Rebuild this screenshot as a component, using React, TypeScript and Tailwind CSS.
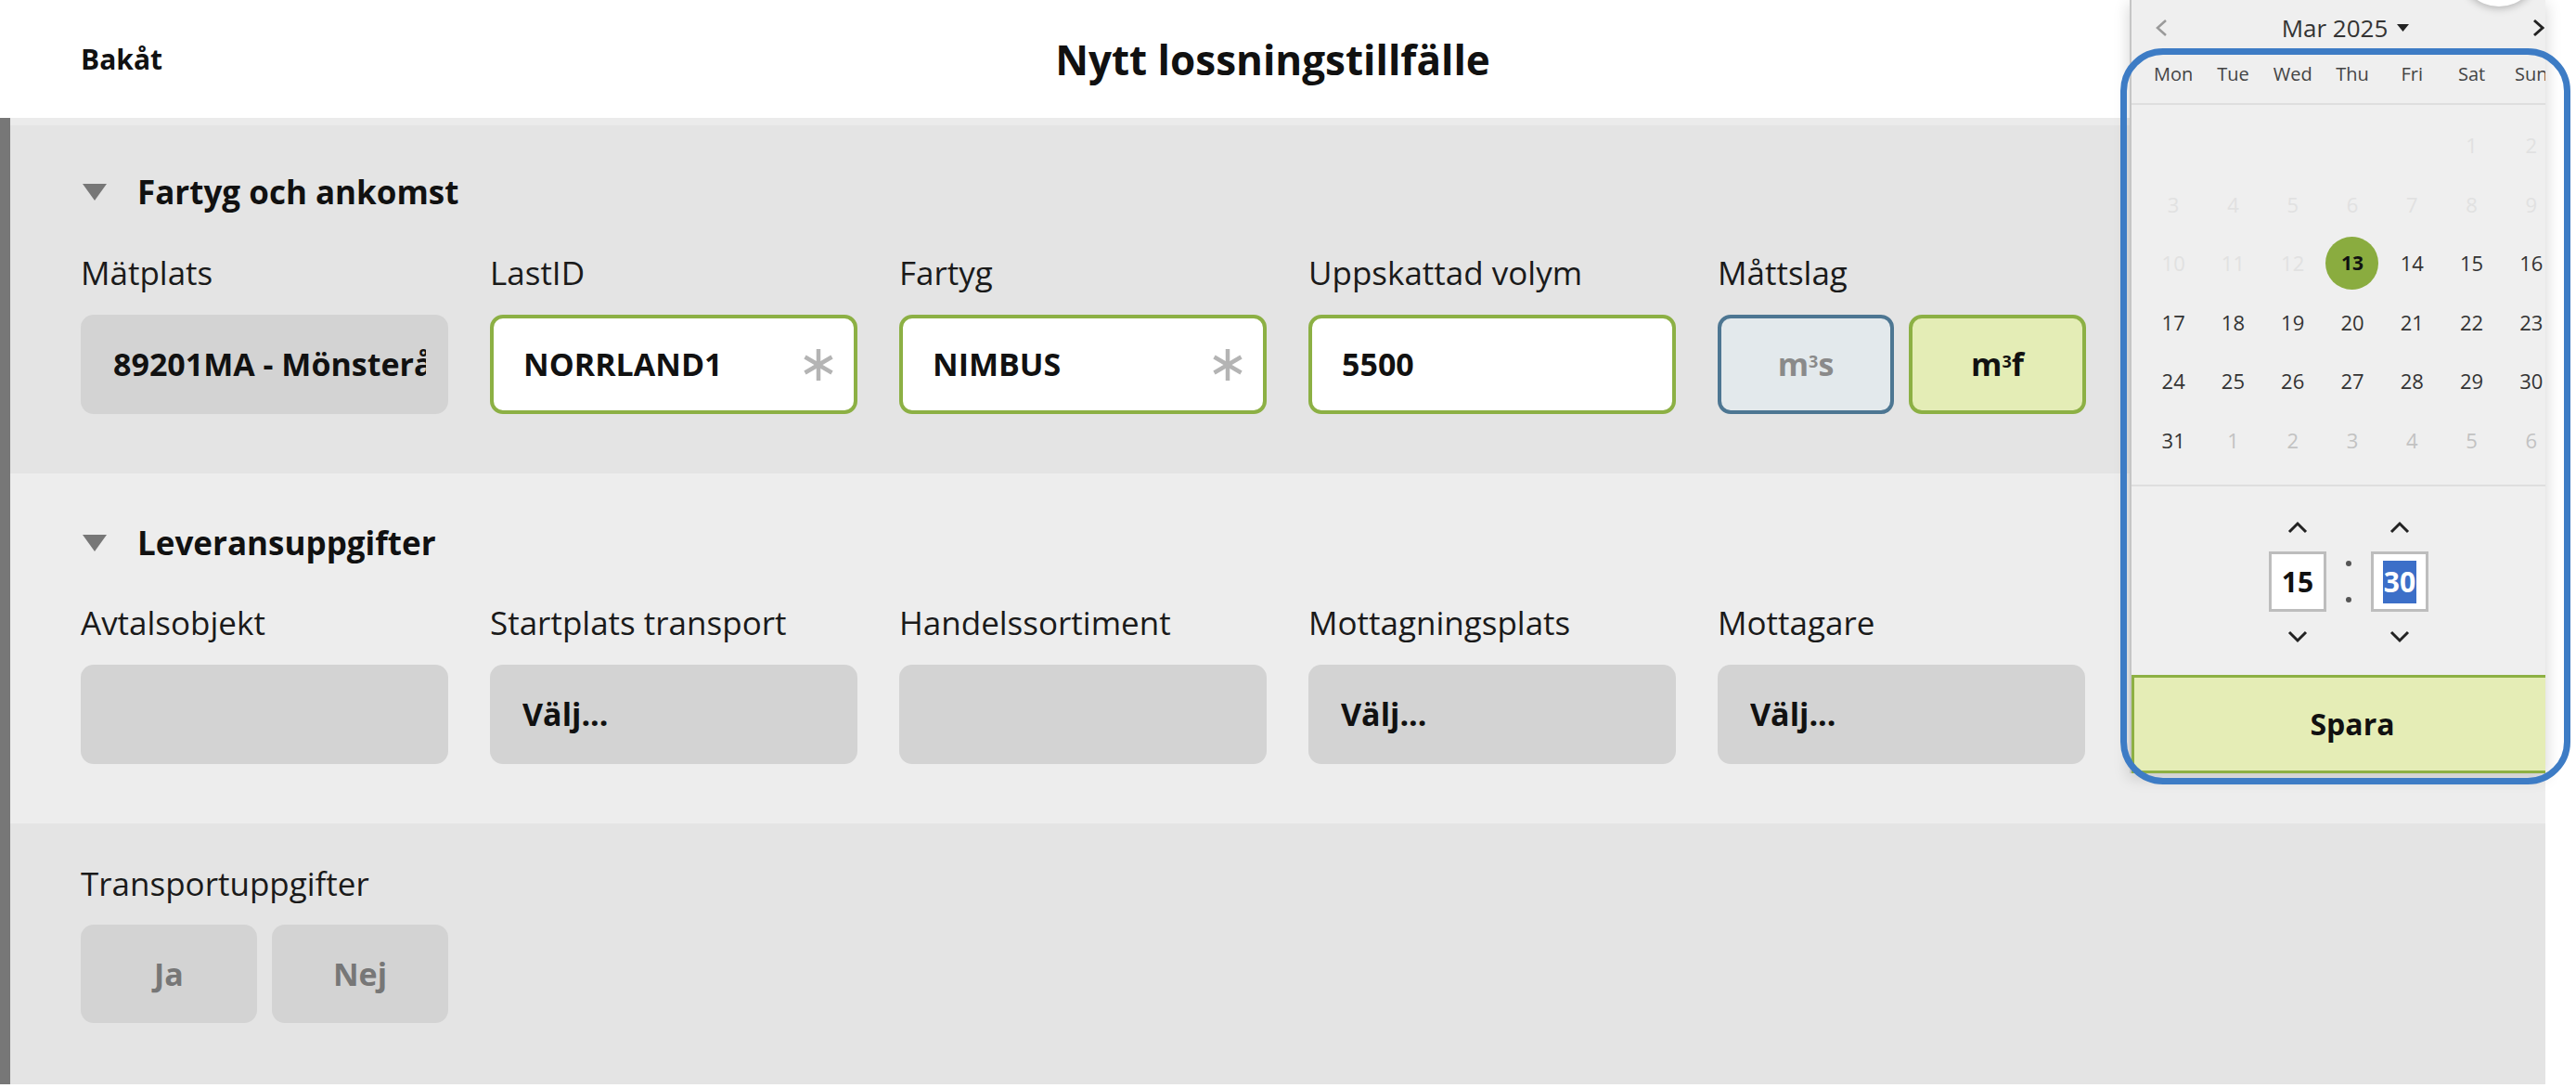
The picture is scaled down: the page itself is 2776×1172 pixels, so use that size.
import React from 'react';

type Field = { label: string; value?: string; kind: 'grey' | 'input' | 'required' };

const row1: Field[] = [
  { label: 'Mätplats', value: '89201MA - Mönsterås', kind: 'grey' },
  { label: 'LastID', value: 'NORRLAND1', kind: 'required' },
  { label: 'Fartyg', value: 'NIMBUS', kind: 'required' },
  { label: 'Uppskattad volym', value: '5500', kind: 'input' },
];

const row2: Field[] = [
  { label: 'Avtalsobjekt', kind: 'grey' },
  { label: 'Startplats transport', value: 'Välj...', kind: 'grey' },
  { label: 'Handelssortiment', kind: 'grey' },
  { label: 'Mottagningsplats', value: 'Välj...', kind: 'grey' },
  { label: 'Mottagare', value: 'Välj...', kind: 'grey' },
];

// dag-status: f = passerad (svag), n = normal, s = vald, x = nästa månad
const weeks: [string, string][][] = [
  [['', 'f'], ['', 'f'], ['', 'f'], ['', 'f'], ['', 'f'], ['1', 'f'], ['2', 'f']],
  [['3', 'f'], ['4', 'f'], ['5', 'f'], ['6', 'f'], ['7', 'f'], ['8', 'f'], ['9', 'f']],
  [['10', 'f'], ['11', 'f'], ['12', 'f'], ['13', 's'], ['14', 'n'], ['15', 'n'], ['16', 'n']],
  [['17', 'n'], ['18', 'n'], ['19', 'n'], ['20', 'n'], ['21', 'n'], ['22', 'n'], ['23', 'n']],
  [['24', 'n'], ['25', 'n'], ['26', 'n'], ['27', 'n'], ['28', 'n'], ['29', 'n'], ['30', 'n']],
  [['31', 'n'], ['1', 'x'], ['2', 'x'], ['3', 'x'], ['4', 'x'], ['5', 'x'], ['6', 'x']],
];

function Triangle() {
  return (
    <svg width="26" height="18" viewBox="0 0 26 18" className="shrink-0">
      <path d="M0 0h26L13 18z" fill="#777" />
    </svg>
  );
}

function Asterisk() {
  return (
    <svg width="36" height="36" viewBox="0 0 36 36" className="shrink-0">
      <g stroke="#b4b4b4" strokeWidth="4.5">
        <line x1="18" y1="1" x2="18" y2="35" />
        <line x1="3.5" y1="9.5" x2="32.5" y2="26.5" />
        <line x1="3.5" y1="26.5" x2="32.5" y2="9.5" />
      </g>
    </svg>
  );
}

function Chevron({ up, color = '#222', w = 22 }: { up?: boolean; color?: string; w?: number }) {
  return (
    <svg width={w} height="14" viewBox="0 0 22 14">
      <polyline
        points={up ? '2,12 11,3 20,12' : '2,2 11,11 20,2'}
        fill="none"
        stroke={color}
        strokeWidth="3"
      />
    </svg>
  );
}

function FieldBox({ f }: { f: Field }) {
  if (f.kind === 'grey') {
    return (
      <div className="h-full w-full rounded-[14px] bg-[#d3d3d3] pl-[35px] pr-[24px] flex items-center">
        <span className="overflow-hidden whitespace-nowrap text-[34px] font-bold">{f.value}</span>
      </div>
    );
  }
  return (
    <div className="h-full w-full rounded-[14px] bg-white border-[4px] border-[#8cb044] pl-[32px] pr-[20px] flex items-center justify-between">
      <span className="whitespace-nowrap text-[34px] font-bold">{f.value}</span>
      {f.kind === 'required' && <Asterisk />}
    </div>
  );
}

function Column({ f }: { f: Field }) {
  return (
    <div className="w-[396px] flex flex-col">
      <div className="h-[46px] leading-[46px] text-[35px] text-[#1a1a1a] whitespace-nowrap">{f.label}</div>
      <div className="mt-[22px] h-[107px]">
        <FieldBox f={f} />
      </div>
    </div>
  );
}

function SectionTitle({ children }: { children: React.ReactNode }) {
  return (
    <div className="h-[46px] flex items-center gap-[33px] pl-[2px]">
      <Triangle />
      <span className="text-[35px] font-bold leading-[46px]">{children}</span>
    </div>
  );
}

function DayCell({ d, s }: { d: string; s: string }) {
  if (s === 's') {
    return (
      <div className="h-[63.5px] flex items-center justify-center">
        <div className="w-[57px] h-[57px] rounded-full bg-[#8aac3f] flex items-center justify-center text-[21px] font-bold text-[#111]">
          {d}
        </div>
      </div>
    );
  }
  const color = s === 'f' ? 'text-[#e1e1e1]' : s === 'x' ? 'text-[#c2c2c2]' : 'text-[#333]';
  return (
    <div className={`h-[63.5px] flex items-center justify-center text-[22px] font-medium ${color}`}>{d}</div>
  );
}

function DatePicker() {
  return (
    <div className="absolute left-[2295px] top-0 w-[448px] h-[833px] overflow-hidden bg-[#efefef] border-l-2 border-[#c6c6c6] shadow-[0_4px_16px_rgba(0,0,0,0.18)]">
      <div className="w-[476px] flex flex-col">
        <div className="h-[60px] flex items-center pl-[26px] pr-[31px]">
          <svg width="13" height="20" viewBox="0 0 13 20">
            <polyline points="11,2 2,10 11,18" fill="none" stroke="#9a9a9a" strokeWidth="2.5" />
          </svg>
          <div className="flex-1 flex items-center justify-center gap-[10px] pr-[10px] text-[26px] text-[#333]">
            <span>Mar 2025</span>
            <svg width="13" height="8" viewBox="0 0 13 8">
              <path d="M0 0h13L6.5 8z" fill="#222" />
            </svg>
          </div>
          <svg width="13" height="20" viewBox="0 0 13 20">
            <polyline points="2,2 11,10 2,18" fill="none" stroke="#222" strokeWidth="3" />
          </svg>
        </div>
        <div className="h-[53px] grid grid-cols-7 px-[13px] pt-[8px] border-b-2 border-[#dedede] text-[20px] leading-[24px] text-[#444] text-center">
          {['Mon', 'Tue', 'Wed', 'Thu', 'Fri', 'Sat', 'Sun'].map((d) => (
            <div key={d}>{d}</div>
          ))}
        </div>
        <div className="pt-[12px] pb-[16px] px-[13px] grid grid-cols-7">
          {weeks.flat().map(([d, s], i) => (
            <DayCell key={i} d={d} s={s} />
          ))}
        </div>
        <div className="h-[205px] border-t-2 border-[#dedede] flex justify-center items-start gap-[20px] pt-[34px] pr-[8px]">
          <div className="w-[62px] flex flex-col items-center">
            <div className="h-[20px] flex items-center"><Chevron up /></div>
            <div className="mt-[16px] w-[62px] h-[65px] bg-white border-[3px] border-[#bdbdbd] flex items-center justify-center text-[30px] font-bold">
              15
            </div>
            <div className="mt-[17px] h-[20px] flex items-center"><Chevron /></div>
          </div>
          <div className="mt-[36px] w-[8px] h-[65px] flex flex-col justify-between items-center py-[10px]">
            <div className="w-[6px] h-[6px] rounded-full bg-[#555]" />
            <div className="w-[6px] h-[6px] rounded-full bg-[#555]" />
          </div>
          <div className="w-[62px] flex flex-col items-center">
            <div className="h-[20px] flex items-center"><Chevron up /></div>
            <div className="mt-[16px] w-[62px] h-[65px] bg-white border-[3px] border-[#bdbdbd] flex items-center justify-center">
              <span className="bg-[#3c6fc8] text-white text-[30px] font-bold leading-[46px] px-[1px]">30</span>
            </div>
            <div className="mt-[17px] h-[20px] flex items-center"><Chevron /></div>
          </div>
        </div>
        <button className="h-[106px] w-full border-[3px] border-[#8db043] bg-[#e5edb6] text-[32px] font-bold text-[#111]">
          Spara
        </button>
      </div>
    </div>
  );
}

export default function App() {
  return (
    <div className="relative w-[2776px] h-[1172px] overflow-hidden bg-white font-['Open_Sans',sans-serif] text-[#111]">
      <div className="w-[2743px] flex flex-col">
        <header className="h-[127px] grid grid-cols-[1fr_auto_1fr] items-center">
          <div className="pl-[87px] text-[30px] font-bold">Bakåt</div>
          <h1 className="text-[44px] font-bold">Nytt lossningstillfälle</h1>
          <div />
        </header>
        <div className="flex">
          <div className="w-[11px] bg-[#777]" />
          <div className="flex-1 flex flex-col border-t-[8px] border-[#ebebeb]">
            <section className="bg-[#e4e4e4] pl-[76px] pt-[49px] pb-[64px]">
              <SectionTitle>Fartyg och ankomst</SectionTitle>
              <div className="mt-[41px] flex gap-[45px]">
                {row1.map((f) => (
                  <Column key={f.label} f={f} />
                ))}
                <div className="w-[397px] flex flex-col">
                  <div className="h-[46px] leading-[46px] text-[35px] text-[#1a1a1a]">Måttslag</div>
                  <div className="mt-[22px] h-[107px] flex gap-[16px]">
                    <div className="w-[190px] rounded-[14px] bg-[#e3e9ec] border-[4px] border-[#4d7692] flex items-center justify-center text-[34px] font-bold text-[#8a8a8a]">
                      <span>m<sup className="text-[18px]">3</sup>s</span>
                    </div>
                    <div className="w-[191px] rounded-[14px] bg-[#e4edb6] border-[4px] border-[#8cb044] flex items-center justify-center text-[34px] font-bold text-[#111]">
                      <span>m<sup className="text-[18px]">3</sup>f</span>
                    </div>
                  </div>
                </div>
              </div>
            </section>
            <section className="bg-[#ededed] pl-[76px] pt-[52px] pb-[64px]">
              <SectionTitle>Leveransuppgifter</SectionTitle>
              <div className="mt-[40px] flex gap-[45px]">
                {row2.map((f) => (
                  <Column key={f.label} f={f} />
                ))}
              </div>
            </section>
            <section className="bg-[#e4e4e4] pl-[76px] pt-[42px] pb-[66px]">
              <div className="h-[46px] leading-[46px] text-[35px] text-[#1a1a1a]">Transportuppgifter</div>
              <div className="mt-[21px] flex gap-[16px]">
                {['Ja', 'Nej'].map((t) => (
                  <div
                    key={t}
                    className="w-[190px] h-[106px] rounded-[14px] bg-[#d3d3d3] flex items-center justify-center text-[34px] font-bold text-[#777]"
                  >
                    {t}
                  </div>
                ))}
              </div>
            </section>
          </div>
        </div>
      </div>

      <DatePicker />

      {/* vit rund knapp ovanför kalendern */}
      <div className="absolute left-[2650px] top-[-79px] w-[86px] h-[86px] rounded-full bg-white shadow-[0_2px_8px_rgba(0,0,0,0.25)]" />

      {/* blå markering runt kalendern */}
      <div className="absolute left-[2285px] top-[52px] w-[485px] h-[793px] border-[7px] border-[#3d7cc5] rounded-[46px] pointer-events-none" />
    </div>
  );
}
